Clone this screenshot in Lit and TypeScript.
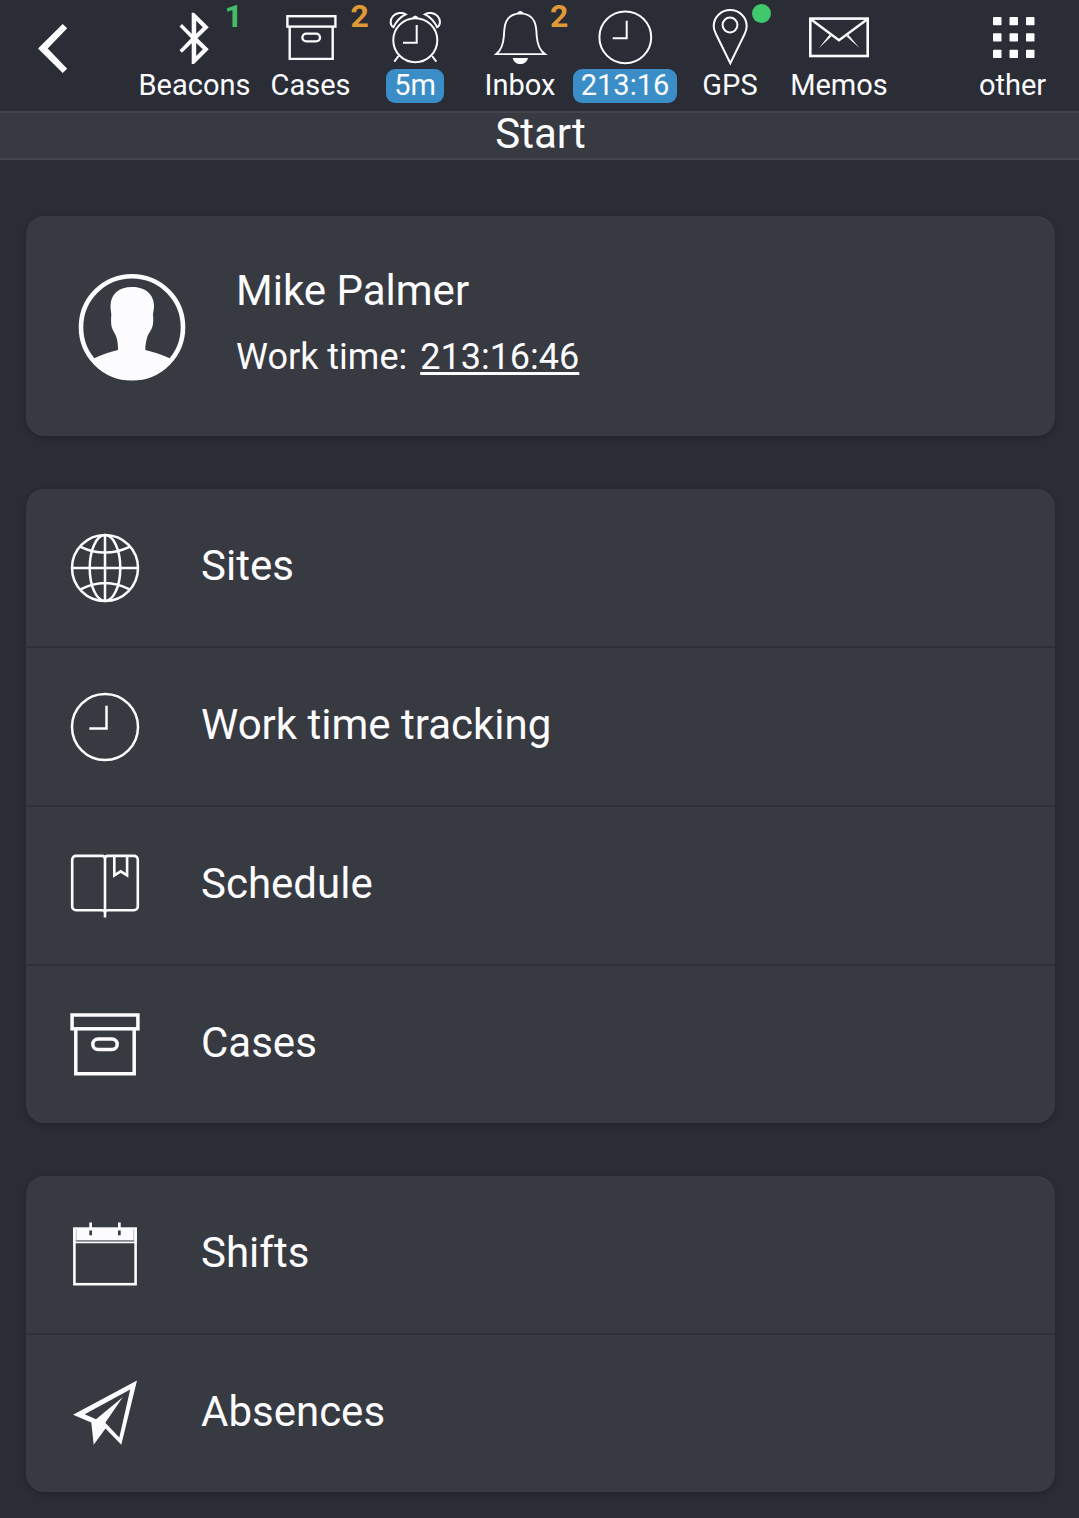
import { LitElement, html, svg, css, nothing, type TemplateResult } from "lit";
import { customElement, property } from "lit/decorators.js";

const BOX_HANDLE = "M0 0";

/* Toolbar icons share a 72x69 canvas. */
const toolIcons: Record<string, TemplateResult> = {
  bluetooth: svg`<path fill="currentColor" fill-rule="evenodd" d="M33.7 12.7H36L50.8 27.3 39.5 38.3 50.8 49.3 36 64H33.7V43.2L24 52.7 21.5 50.2 33 38.3 21.5 26.5 24 24 33.7 33.7ZM38.2 20.7V33.8L44.8 27.3ZM38.2 43V56L44.8 49.3Z"/>`,
  box: svg`<g stroke-width="2.4"><rect x="12.4" y="16.2" width="48" height="10.4"/><path d="M14.7 27V58.9H57.7V27"/><rect x="27.4" y="33.6" width="17.6" height="7.8" rx="3.9"/></g>`,
  alarm: svg`<g stroke-width="2"><circle cx="36.3" cy="40.2" r="22"/><path d="M37.7 25V42.8H24"/><path d="M14.4 27.2C10.6 25 11 19.500 14 16.200C17.500 12.500 23 12.200 26.700 14.300C21.600 16.700 17.300 21.200 14.400 27.200Z"/><path d="M58.200 27.200C62 25 61.600 19.500 58.600 16.200C55.100 12.500 49.600 12.200 45.900 14.300C51 16.700 55.300 21.200 58.200 27.200Z"/><path d="M19.500 56 15.300 61.700M53.100 56 57.300 61.700"/><path d="M33.800 18 36.300 16.700 38.800 18"/></g>`,
  bell: svg`<path stroke-width="1.900" d="M12.300 54.100C17.500 50 19.300 44 19.900 36C20.200 27 20.400 14 36.300 13.400C52.200 14 52.400 27 52.700 36C53.300 44 55.100 50 60.900 54.100Z"/><path fill="currentColor" d="M32.800 13.600C34 10 38.600 10 39.800 13.600ZM28.700 58H44C43 62 40 64 36.300 64S29.700 62 28.700 58Z"/>`,
  clock: svg`<g stroke-width="2"><circle cx="36.300" cy="37.300" r="25.900"/><path d="M37.700 20.700V38.200H23.700"/></g>`,
  pin: svg`<g stroke-width="2"><path d="M36.300 63.300L22.200 34.500C20.400 31.200 19.700 28.800 19.700 26.300A16.500 16.300 0 0 1 52.700 26.300C52.700 28.800 52 31.200 50.400 34.500Z"/><circle cx="36" cy="25" r="7.400"/></g>`,
  mail: svg`<rect stroke-width="2.600" x="7.300" y="18.600" width="57.400" height="37.400"/><path stroke-width="2.400" d="M8.500 19.800 36 40.300 63.700 19.800"/><path fill="currentColor" d="M26.500 34.700 28.500 36.300 16 47.900ZM45.400 34.700 43.400 36.300 56.500 47.900Z"/>`,
  grid: svg`${[16, 32.5, 49].map((x) => [17, 33.3, 49.700].map((y) => svg`<rect fill="currentColor" x=${x} y=${y} width="8.500" height="8.300" rx="0.800"/>`))}`,
};

/* Menu icons share a 72x72 canvas. */
const menuIcons: Record<string, TemplateResult> = {
  globe: svg`<g stroke-width="2.500"><circle cx="36" cy="36" r="33"/><ellipse cx="36" cy="36" rx="15.300" ry="33"/><path d="M36 3V69M3 36H69M11.500 14.800Q36 26.400 60.500 14.800M11.500 57.400Q36 44.600 60.500 57.400"/></g>`,
  clock: svg`<g stroke-width="2.500"><circle cx="36" cy="36" r="33"/><path d="M37.500 14.800V37.500H20.300"/></g>`,
  book: svg`<g stroke-width="2.600"><path d="M36 67.500V9C36 7.300 34.800 5.900 33 5.900H7A3.800 3.800 0 0 0 3.200 9.700V56.500A3.800 3.800 0 0 0 7 60.300H33C34.800 60.300 36 61.500 36 63C36 61.500 37.200 60.300 39 60.300H65A3.800 3.800 0 0 0 68.800 56.500V9.700A3.800 3.800 0 0 0 65 5.900H39C37.200 5.900 36 7.300 36 9"/><path d="M45.300 6V25.300L51.700 21.300 58.100 25.300V6"/></g>`,
  box: svg`<g stroke-width="3.500"><rect x="3.100" y="6" width="65.800" height="13.800"/><path d="M6.800 20V64.700H65.200V20"/><rect x="23.800" y="30" width="24.400" height="10.600" rx="5.300"/></g>`,
  calendar: svg`<rect stroke-width="2.600" x="5.400" y="9.900" width="61.200" height="55.300"/><path fill="currentColor" d="M4 8.500H68V21.300H4ZM4 22.500H68V24.300H4ZM20.300 3.500H23V9H20.300ZM49 3.500H51.700V9H49Z"/><path class="cut" d="M20.300 11.500H23V16.300H20.300ZM49 11.500H51.700V16.300H49Z"/><path class="seam" d="M7.300 10V21.800H64.700V10"/>`,
  plane: svg`<path fill="currentColor" fill-rule="evenodd" d="M68 2.500 4 36.800 22.300 44.500 24.700 66.800 36.500 50.500 52.300 66.800ZM61.200 11.500 50.300 59.500 36.300 44.800 53.700 19.200 27 41.200 15.700 36.200Z"/>`,
};

interface Tool {
  icon: string;
  label: string;
  pill?: boolean;
  badge?: string;
  tone?: "green" | "orange";
  dot?: boolean;
}

const tools: Tool[] = [
  { icon: "bluetooth", label: "Beacons", badge: "1", tone: "green" },
  { icon: "box", label: "Cases", badge: "2", tone: "orange" },
  { icon: "alarm", label: "5m", pill: true },
  { icon: "bell", label: "Inbox", badge: "2", tone: "orange" },
  { icon: "clock", label: "213:16", pill: true },
  { icon: "pin", label: "GPS", dot: true },
  { icon: "mail", label: "Memos" },
];

const groups = [
  [
    { icon: "globe", label: "Sites" },
    { icon: "clock", label: "Work time tracking" },
    { icon: "book", label: "Schedule" },
    { icon: "box", label: "Cases" },
  ],
  [
    { icon: "calendar", label: "Shifts" },
    { icon: "plane", label: "Absences" },
  ],
];

@customElement("tool-item")
export class ToolItem extends LitElement {
  @property({ attribute: false }) item!: Tool;

  static styles = css`
    :host {
      display: flex;
      justify-content: center;
    }
    .item {
      position: relative;
      display: flex;
      flex-direction: column;
      align-items: center;
    }
    svg {
      display: block;
      width: 72px;
      height: 69px;
      fill: none;
      stroke-width: 0;
      stroke: currentColor;
    }
    .label {
      height: 34px;
      line-height: 32px;
      font-size: 29px;
      white-space: nowrap;
    }
    .pill {
      padding: 0 8px;
      border-radius: 9px;
      background: #3b8dc8;
    }
    .badge {
      position: absolute;
      left: calc(50% + 40px);
      top: -3px;
      font-size: 32px;
      line-height: 38px;
      font-weight: 700;
    }
    .green {
      left: calc(50% + 30px);
      color: #45bd68;
    }
    .orange {
      color: #e09a35;
    }
    .bell {
      left: calc(50% + 30px);
    }
    .dot {
      position: absolute;
      left: calc(50% + 22px);
      top: 4px;
      width: 19px;
      height: 19px;
      border-radius: 50%;
      background: #40c86d;
    }
  `;

  render() {
    const t = this.item;
    return html`<div class="item">
      <svg viewBox="0 0 72 69">${toolIcons[t.icon]}</svg>
      <span class="label ${t.pill ? "pill" : ""}">${t.label}</span>
      ${t.badge ? html`<span class="badge ${t.tone} ${t.icon}">${t.badge}</span>` : nothing}
      ${t.dot ? html`<span class="dot"></span>` : nothing}
    </div>`;
  }
}

@customElement("menu-group")
export class MenuGroup extends LitElement {
  @property({ attribute: false }) items: { icon: string; label: string }[] = [];

  static styles = css`
    :host {
      display: block;
      border-radius: 18px;
      background: #383a42;
      box-shadow: 0 2px 5px rgba(20, 20, 26, 0.35);
    }
    .row {
      display: flex;
      align-items: center;
      gap: 60px;
      height: 157px;
      padding-left: 43px;
    }
    .row + .row {
      border-top: 2px solid #2e3038;
    }
    svg {
      flex: none;
      width: 72px;
      height: 72px;
      fill: none;
      stroke-width: 0;
      stroke: currentColor;
    }
    .cut {
      fill: #383a42;
    }
    .seam {
      stroke: #a9aaae;
      stroke-width: 0.7;
    }
    .label {
      font-size: 42px;
      line-height: 50px;
      padding-bottom: 3px;
      white-space: nowrap;
    }
  `;

  render() {
    return this.items.map(
      (i) => html`<div class="row">
        <svg viewBox="0 0 72 72">${menuIcons[i.icon]}</svg>
        <span class="label">${i.label}</span>
      </div>`
    );
  }
}

@customElement("app-root")
export class AppRoot extends LitElement {
  static styles = css`
    :host {
      display: block;
      min-height: 100vh;
      background: #2a2c36;
      color: #fcfcff;
      font-family: Roboto, "Liberation Sans", sans-serif;
    }
    .toolbar {
      display: grid;
      grid-template-columns: 136px 117px 115px 94px 116px 94px 116px 102px 56px 133px;
      height: 111px;
    }
    .last {
      grid-column: 10;
    }
    .back {
      display: block;
      width: 136px;
      height: 111px;
    }
    .title {
      box-sizing: border-box;
      height: 49px;
      border-top: 2px solid #42454d;
      border-bottom: 2px solid #42454d;
      background: #383a42;
      font-size: 42px;
      line-height: 41px;
      text-align: center;
      padding-left: 2px;
    }
    .content {
      display: flex;
      flex-direction: column;
      gap: 53px;
      padding: 56px 24px 27px 26px;
    }
    .profile {
      display: flex;
      gap: 50px;
      box-sizing: border-box;
      height: 220px;
      padding: 50px 52px;
      border-radius: 18px;
      background: #383a42;
      box-shadow: 0 2px 5px rgba(20, 20, 26, 0.35);
    }
    .avatar {
      flex: none;
      width: 108px;
      height: 108px;
      margin-top: 7px;
    }
    .who {
      display: flex;
      flex-direction: column;
      gap: 20px;
      white-space: nowrap;
    }
    .name {
      font-size: 42px;
      line-height: 50px;
    }
    .time {
      display: flex;
      gap: 13px;
      font-size: 36px;
      line-height: 42px;
    }
    .value {
      text-decoration: underline;
      text-decoration-thickness: 3px;
      text-underline-offset: 3px;
      text-decoration-skip-ink: none;
    }
  `;

  render() {
    return html`
      <header class="toolbar">
        <svg class="back" viewBox="0 0 136 111">
          <path fill="currentColor" d="M62.700 24 67.200 28.300 47.700 48.400 67.200 68.700 62.700 73 38 48.400Z" />
        </svg>
        ${tools.map((t) => html`<tool-item .item=${t}></tool-item>`)}
        <tool-item class="last" .item=${{ icon: "grid", label: "other" }}></tool-item>
      </header>
      <div class="title">Start</div>
      <main class="content">
        <section class="profile">
          <svg class="avatar" viewBox="0 0 108 108">
            <circle cx="54" cy="54.300" r="51" fill="none" stroke="currentColor" stroke-width="4.600" />
            <path
              fill="currentColor"
              d="M54 14C67 14 76 21 76 33C76 37 75 39 75 42C75.400 46 75.500 51 74 55C72 59 70 61 69 65C68 69 67.300 72 67.300 77C76 79 85 82 93.500 86A51 51 0 0 1 14.500 86C23 82 31 79 40 77C40 72 39.600 69 38.700 65C37.500 61 35.500 59 34 55C32.800 51 33 46 33.300 42C33.300 39 32.500 37 32.500 33C32.500 21 41 14 54 14Z"
            />
          </svg>
          <div class="who">
            <div class="name">Mike Palmer</div>
            <div class="time"><span>Work time:</span><span class="value">213:16:46</span></div>
          </div>
        </section>
        ${groups.map((g) => html`<menu-group .items=${g}></menu-group>`)}
      </main>
    `;
  }
}
